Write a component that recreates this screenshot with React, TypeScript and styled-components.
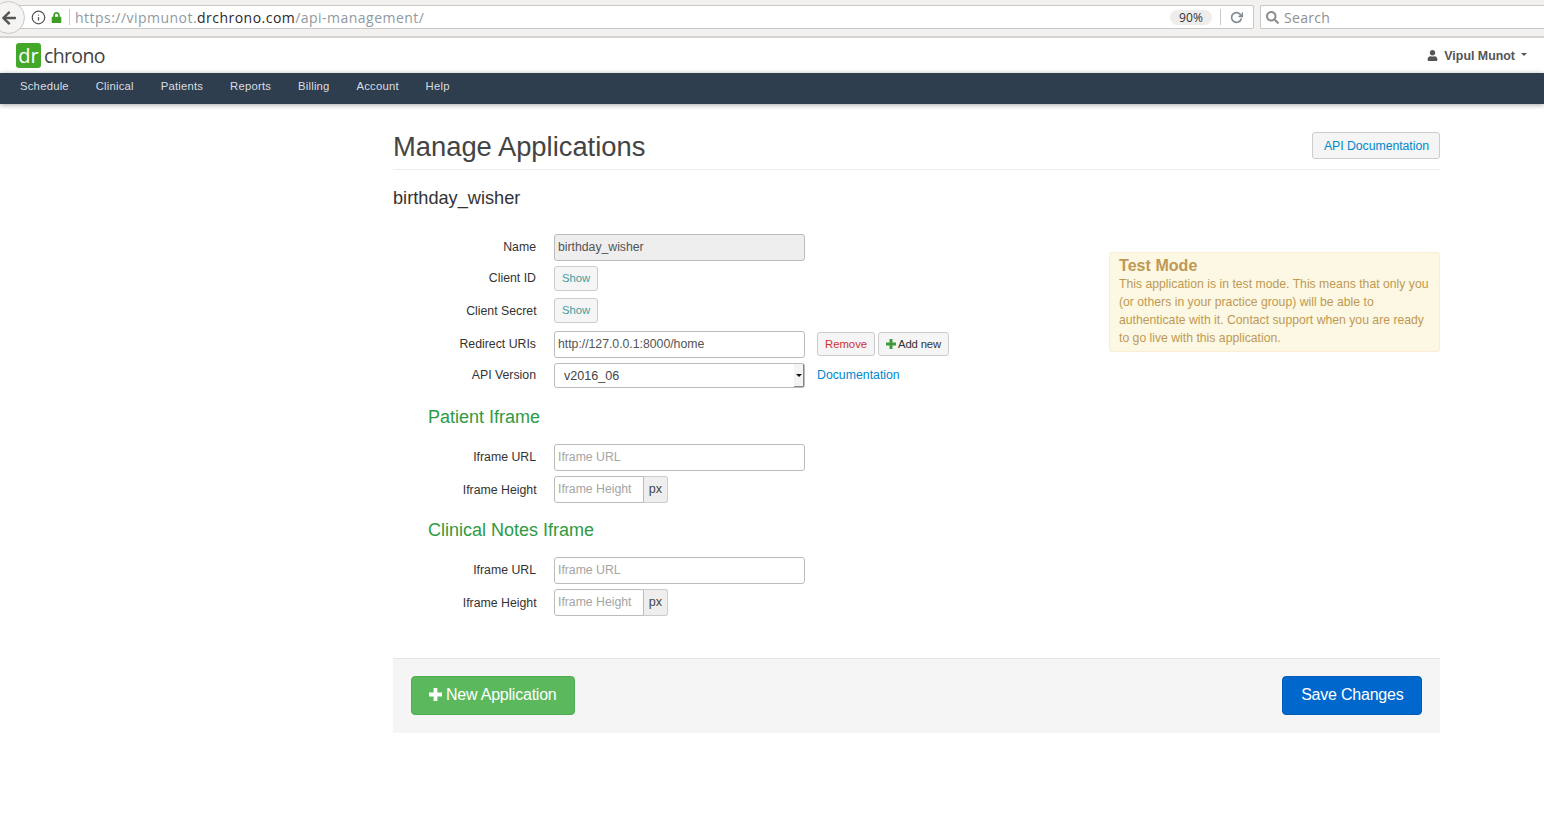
import React from "react";
import styled, { createGlobalStyle } from "styled-components";
import { FaUser, FaLock, FaSearch, FaArrowLeft } from "react-icons/fa";
import { FiInfo, FiRotateCw } from "react-icons/fi";

const GlobalStyle = createGlobalStyle`
  html, body { margin: 0; padding: 0; background: #fff; }
  body { font-family: "Liberation Sans", Arial, sans-serif; font-size: 12.3px; color: #333; overflow: hidden; }
  * { box-sizing: border-box; }
`;

const BrowserBar = styled.div`
  height: 38px;
  background: #f2f1ef;
  border-bottom: 2px solid #d4d3d1;
  display: flex;
  gap: 6px;
  padding-top: 5px;
  font-family: "Open Sans", "Noto Sans", sans-serif;
`;
const UrlBox = styled.div`
  position: relative;
  width: 1254px;
  height: 24px;
  background: #fff;
  border: 1px solid #c9c8c6;
  border-radius: 0 2px 2px 0;
  display: flex;
  align-items: center;
  padding-left: 30px;
  font-size: 14px;
  letter-spacing: 0.47px;
  color: #8f9aa3;
`;
const BackButton = styled.div`
  position: absolute;
  left: -9px;
  top: -5px;
  width: 33px;
  height: 33px;
  border-radius: 50%;
  background: #f5f4f2;
  border: 1px solid #c9c8c6;
  color: #555;
  display: flex;
  align-items: center;
  justify-content: center;
  padding-left: 1px;
  font-size: 16px;
`;
const LockIcon = styled(FaLock)`
  color: #3f9c26;
  font-size: 11px;
  margin-left: 5px;
  margin-right: 7px;
`;
const InfoIcon = styled(FiInfo)`
  color: #555;
  font-size: 15px;
`;
const UrlDivider = styled.span`
  width: 1px;
  height: 16px;
  background: #c9c8c6;
  margin-right: 5px;
`;
const UrlDomain = styled.span`
  color: #2a2a2a;
`;
const UrlActions = styled.div`
  margin-left: auto;
  display: flex;
  align-items: center;
  padding-right: 10px;
  color: #7f8a92;
`;
const ZoomPill = styled.span`
  width: 42px;
  height: 15px;
  line-height: 15px;
  border-radius: 8px;
  background: #eeedeb;
  color: #333;
  font-size: 12px;
  letter-spacing: 0.2px;
  text-align: center;
  margin-right: 8px;
`;
const ReloadDivider = styled(UrlDivider)`
  margin-right: 4px;
`;
const ReloadIcon = styled(FiRotateCw)`
  margin-left: 5px;
  font-size: 13px;
  stroke-width: 3;
`;
const SearchBox = styled.div`
  flex: 1;
  height: 24px;
  background: #fff;
  border: 1px solid #c9c8c6;
  border-right: none;
  border-radius: 2px 0 0 2px;
  display: flex;
  align-items: center;
  gap: 5px;
  padding-left: 5px;
  font-size: 14px;
  letter-spacing: 0.3px;
  color: #8f8f8f;
`;

const TopBar = styled.header`
  height: 35px;
  background: #fff;
  display: flex;
  align-items: center;
  justify-content: space-between;
  padding: 0 17px 0 16px;
`;
const Logo = styled.div`
  display: flex;
  align-items: center;
  gap: 3px;
  font-family: "Open Sans", "Noto Sans", sans-serif;
  font-size: 19.5px;
  letter-spacing: -0.65px;
  color: #444;
`;
const LogoMark = styled.span`
  width: 25px;
  height: 25px;
  border-radius: 3px;
  background: #43a72a;
  color: #fff;
  display: flex;
  align-items: center;
  justify-content: center;
  line-height: 1;
  font-size: 20px;
  letter-spacing: 0;
`;
const UserMenu = styled.div`
  display: flex;
  align-items: center;
  gap: 6px;
  font-weight: bold;
  font-size: 12.4px;
  color: #555;
`;
const Caret = styled.span`
  width: 0;
  height: 0;
  border-left: 3.5px solid transparent;
  border-right: 3.5px solid transparent;
  border-top: 3.5px solid #555;
  margin-bottom: 2px;
`;

const NavBar = styled.nav`
  height: 31px;
  background: #2f3e4e;
  box-shadow: 0 1px 5px rgba(0, 0, 0, 0.35);
  display: flex;
  align-items: center;
  gap: 26.8px;
  padding: 0 0 5px 20px;
`;
const NavItem = styled.a`
  color: #d8dde2;
  font-size: 11.3px;
  letter-spacing: 0.22px;
`;

const Page = styled.main`
  width: 1047px;
  margin-left: 393px;
`;
const PageHeader = styled.div`
  display: flex;
  justify-content: space-between;
  align-items: flex-start;
  height: 66px;
  padding-top: 28px;
  border-bottom: 1px solid #eee;
`;
const Title = styled.h1`
  margin: 0;
  font-size: 27.35px;
  font-weight: normal;
  line-height: 30px;
  color: #444;
`;
const DefaultButton = styled.button`
  height: 27px;
  padding: 0 10px 0 11px;
  background: #f5f5f5;
  border: 1px solid #ccc;
  border-radius: 3px;
  font-family: inherit;
  font-size: 12.3px;
  letter-spacing: -0.05px;
  color: #0088cc;
`;
const AppName = styled.h2`
  margin: 16px 0 24px;
  font-size: 18.2px;
  font-weight: normal;
  line-height: 24px;
  color: #333;
`;
const Columns = styled.div`
  display: flex;
  justify-content: space-between;
  align-items: flex-start;
`;
const FormColumn = styled.form`
  display: flex;
  flex-direction: column;
`;
const Row = styled.div<{ $h: number; $gap?: number }>`
  display: grid;
  grid-template-columns: 143px 251px auto;
  column-gap: 18px;
  align-items: center;
  height: ${(p) => p.$h}px;
  margin-bottom: ${(p) => p.$gap ?? 5}px;
`;
const Label = styled.label<{ $low?: boolean }>`
  text-align: right;
  font-size: 12.3px;
  color: #333;
  padding-bottom: ${(p) => (p.$low ? 0 : 1)}px;
  padding-top: ${(p) => (p.$low ? 1 : 0)}px;
  margin-right: ${(p) => (p.$low ? -0.6 : 0)}px;
`;
const TextField = styled.div<{ $muted?: boolean; $placeholder?: boolean }>`
  height: 27px;
  line-height: 24px;
  padding-left: 3px;
  border: 1px solid #bbb;
  border-radius: 3px;
  font-size: 12.3px;
  letter-spacing: -0.03px;
  background: ${(p) => (p.$muted ? "#eee" : "#fff")};
  color: ${(p) => (p.$placeholder ? "#a5a5a5" : "#555")};
`;
const ShowButton = styled(DefaultButton)`
  justify-self: start;
  height: 25px;
  padding: 0 7px 1px;
  font-size: 11.3px;
  letter-spacing: 0;
  color: #3a9e9e;
`;
const SelectField = styled.div`
  position: relative;
  height: 25px;
  line-height: 24px;
  padding-left: 9px;
  border: 1px solid #bbb;
  border-radius: 3px;
  font-size: 12.6px;
  color: #444;
`;
const SelectArrow = styled.span`
  position: absolute;
  right: 0;
  top: 0;
  bottom: 0;
  width: 10px;
  background: #f4f4f4;
  border-right: 1px solid #888;
  border-bottom: 1px solid #888;
  display: flex;
  align-items: center;
  justify-content: center;
  &::after {
    content: "";
    border-left: 3px solid transparent;
    border-right: 3px solid transparent;
    border-top: 3px solid #111;
  }
`;
const RowActions = styled.div`
  display: flex;
  gap: 3px;
  margin-left: -6px;
  margin-top: -1px;
`;
const SmallButton = styled(DefaultButton)<{ $danger?: boolean }>`
  height: 24px;
  padding: 0 7px;
  font-size: 11.3px;
  letter-spacing: ${(p) => (p.$danger ? "0" : "-0.15px")};
  color: ${(p) => (p.$danger ? "#d2322d" : "#333")};
  display: flex;
  align-items: center;
  gap: 2px;
`;
const PlusGlyph = styled.svg<{ $size: number; $color: string }>`
  width: ${(p) => p.$size}px;
  height: ${(p) => p.$size}px;
  fill: ${(p) => p.$color};
  flex: none;
`;
const DocLink = styled.a`
  margin-left: -6px;
  margin-top: -2px;
  font-size: 12.3px;
  color: #0088cc;
`;
const SectionTitle = styled.h3<{ $mt: number }>`
  margin: ${(p) => p.$mt}px 0 14px 35px;
  font-size: 18px;
  font-weight: normal;
  line-height: 25px;
  color: #2f9a44;
`;
const InputGroup = styled.div`
  display: flex;
  width: 114px;
  height: 27px;
`;
const GroupInput = styled(TextField)`
  width: 90px;
  border-radius: 3px 0 0 3px;
  flex: none;
  line-height: 25px;
`;
const GroupAddon = styled.span`
  flex: 1;
  line-height: 25px;
  text-align: center;
  background: #eee;
  border: 1px solid #ccc;
  border-left: none;
  border-radius: 0 3px 3px 0;
  font-size: 12.6px;
  color: #444;
`;
const Notice = styled.aside`
  width: 331px;
  height: 100px;
  margin-top: 18px;
  padding: 4px 9px;
  background: #fcf8e3;
  border: 1px solid #fbeed5;
  border-radius: 3px;
  font-size: 12.22px;
  line-height: 18px;
  color: #c09853;
`;
const NoticeTitle = styled.div`
  font-size: 16px;
  letter-spacing: 0.05px;
  font-weight: bold;
  line-height: 18px;
`;
const FormActions = styled.footer`
  display: flex;
  justify-content: space-between;
  align-items: flex-start;
  height: 75px;
  margin-top: 42px;
  padding: 17px 18px 0;
  background: #f5f5f5;
  border-top: 1px solid #e5e5e5;
`;
const LargeButton = styled.button<{ $green?: boolean }>`
  height: 39px;
  padding: 0 17.5px 2px ${(p) => (p.$green ? 17 : 18)}px;
  display: flex;
  align-items: center;
  gap: 4px;
  border-radius: 4px;
  font-family: inherit;
  font-size: 16px;
  letter-spacing: -0.22px;
  color: #fff;
  background: ${(p) => (p.$green ? "#5cb85c" : "#0068cc")};
  border: 1px solid ${(p) => (p.$green ? "#4cae4c" : "#005cb8")};
`;

const navItems = ["Schedule", "Clinical", "Patients", "Reports", "Billing", "Account", "Help"];

const Plus = ({ size, color }: { size: number; color: string }) => (
  <PlusGlyph $size={size} $color={color} viewBox="0 0 13 13">
    <path d="M4.6 0h3.8v4.6H13v3.8H8.4V13H4.6V8.4H0V4.6h4.6z" />
  </PlusGlyph>
);

const IframeFields = () => (
  <>
    <Row $h={27}>
      <Label>Iframe URL</Label>
      <TextField $placeholder>Iframe URL</TextField>
    </Row>
    <Row $h={27} $gap={0}>
      <Label $low>Iframe Height</Label>
      <InputGroup>
        <GroupInput $placeholder>Iframe Height</GroupInput>
        <GroupAddon>px</GroupAddon>
      </InputGroup>
    </Row>
  </>
);

export default function App() {
  return (
    <>
      <GlobalStyle />
      <BrowserBar>
        <UrlBox>
          <BackButton>
            <FaArrowLeft />
          </BackButton>
          <InfoIcon />
          <LockIcon />
          <UrlDivider />
          https://vipmunot.<UrlDomain>drchrono.com</UrlDomain>/api-management/
          <UrlActions>
            <ZoomPill>90%</ZoomPill>
            <ReloadDivider />
            <ReloadIcon />
          </UrlActions>
        </UrlBox>
        <SearchBox>
          <FaSearch size={13} />
          Search
        </SearchBox>
      </BrowserBar>
      <TopBar>
        <Logo>
          <LogoMark>dr</LogoMark>
          chrono
        </Logo>
        <UserMenu>
          <FaUser size={11} />
          Vipul Munot
          <Caret />
        </UserMenu>
      </TopBar>
      <NavBar>
        {navItems.map((item) => (
          <NavItem key={item}>{item}</NavItem>
        ))}
      </NavBar>
      <Page>
        <PageHeader>
          <Title>Manage Applications</Title>
          <DefaultButton>API Documentation</DefaultButton>
        </PageHeader>
        <AppName>birthday_wisher</AppName>
        <Columns>
          <FormColumn>
            <Row $h={27}>
              <Label>Name</Label>
              <TextField $muted>birthday_wisher</TextField>
            </Row>
            <Row $h={25} $gap={7}>
              <Label>Client ID</Label>
              <ShowButton type="button">Show</ShowButton>
            </Row>
            <Row $h={25} $gap={8}>
              <Label $low>Client Secret</Label>
              <ShowButton type="button">Show</ShowButton>
            </Row>
            <Row $h={27}>
              <Label>Redirect URIs</Label>
              <TextField>http://127.0.0.1:8000/home</TextField>
              <RowActions>
                <SmallButton type="button" $danger>Remove</SmallButton>
                <SmallButton type="button">
                  <Plus size={10} color="#3c9a3c" />
                  Add new
                </SmallButton>
              </RowActions>
            </Row>
            <Row $h={25} $gap={0}>
              <Label>API Version</Label>
              <SelectField>
                v2016_06
                <SelectArrow />
              </SelectField>
              <DocLink>Documentation</DocLink>
            </Row>
            <SectionTitle $mt={17}>Patient Iframe</SectionTitle>
            <IframeFields />
            <SectionTitle $mt={15}>Clinical Notes Iframe</SectionTitle>
            <IframeFields />
          </FormColumn>
          <Notice>
            <NoticeTitle>Test Mode</NoticeTitle>
            This application is in test mode. This means that only you (or others in your practice group) will be able to authenticate with it. Contact support when you are ready to go live with this application.
          </Notice>
        </Columns>
        <FormActions>
          <LargeButton $green type="button">
            <Plus size={13} color="#fff" />
            New Application
          </LargeButton>
          <LargeButton type="button">Save Changes</LargeButton>
        </FormActions>
      </Page>
    </>
  );
}
